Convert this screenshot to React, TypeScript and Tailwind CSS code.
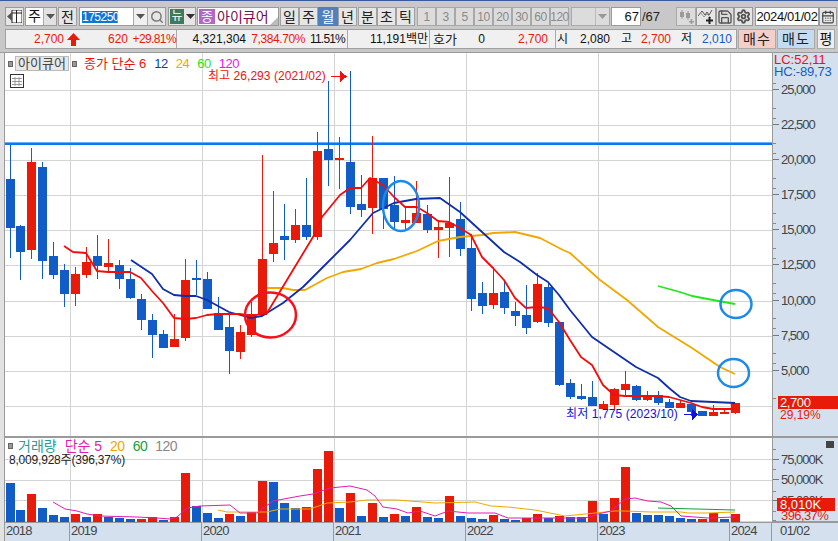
import type { ReactNode } from "react";
import { Search, Settings, Save, CalendarDays } from "lucide-react";

const RED = "#e81a0a";
const BLUE = "#125cc8";
const KR = "font-['Liberation_Sans','Noto_Sans_CJK_KR',sans-serif]";

// [wickTop, wickBottom, bodyTop, bodyBottom, up]
const candles: [number, number, number, number, number][] = [
  [145, 258, 179, 228, 0], [225, 280, 226, 252, 0], [148, 259, 162, 250, 1], [162, 279, 167, 261, 0],
  [242, 279, 256, 275, 0], [264, 307, 270, 294, 0], [267, 306, 274, 294, 1], [247, 278, 262, 275, 1],
  [235, 279, 256, 266, 0], [239, 272, 263, 267, 1], [260, 289, 265, 279, 0], [268, 299, 279, 298, 0],
  [294, 330, 299, 320, 0], [314, 358, 320, 335, 0], [330, 348, 334, 348, 0], [314, 347, 339, 347, 1],
  [259, 341, 280, 338, 1], [260, 295, 278, 280, 0], [272, 309, 279, 309, 0], [297, 330, 313, 330, 0],
  [313, 374, 327, 351, 0], [325, 359, 332, 352, 1], [302, 337, 314, 335, 1], [155, 315, 259, 315, 1],
  [191, 262, 243, 254, 1], [204, 260, 236, 240, 0], [209, 243, 225, 240, 1], [178, 240, 225, 237, 0],
  [132, 240, 151, 237, 1], [81, 186, 149, 160, 0], [137, 189, 158, 160, 1], [71, 214, 162, 207, 0],
  [175, 217, 204, 210, 0], [136, 234, 178, 208, 1], [178, 229, 178, 209, 0], [176, 229, 205, 222, 0],
  [208, 230, 220, 223, 1], [181, 223, 213, 223, 1], [205, 233, 214, 230, 0], [220, 258, 227, 230, 1],
  [177, 257, 223, 228, 1], [202, 256, 219, 249, 0], [234, 311, 248, 299, 0], [282, 314, 293, 306, 0],
  [267, 309, 293, 305, 1], [280, 314, 292, 308, 0], [302, 326, 311, 316, 0], [285, 334, 315, 328, 0],
  [273, 323, 284, 322, 1], [283, 327, 287, 323, 0], [322, 386, 322, 385, 0], [379, 399, 383, 397, 0],
  [384, 400, 396, 399, 0], [381, 406, 397, 406, 0], [401, 409, 404, 409, 1], [388, 409, 389, 405, 1],
  [371, 395, 384, 390, 1], [385, 401, 386, 400, 0], [391, 401, 395, 400, 1], [391, 405, 395, 403, 0],
  [399, 408, 402, 408, 0], [400, 408, 403, 408, 1], [404, 416, 404, 412, 0], [411, 416, 411, 416, 0],
  [405, 416, 412, 416, 1], [410, 414, 412, 413, 1], [403, 414, 403, 413, 1],
];

// [top, up]
const volumes: [number, number][] = [
  [482, 0], [509, 0], [493, 1], [507, 0], [514, 0], [516, 0], [513, 1], [516, 0], [513, 1], [516, 0],
  [517, 0], [518, 0], [518, 1], [516, 1], [519, 0], [516, 1], [472, 1], [505, 0], [512, 0], [517, 0],
  [513, 1], [515, 0], [511, 1], [480, 1], [481, 0], [502, 0], [507, 0], [506, 1], [468, 1], [450, 1],
  [507, 0], [492, 1], [515, 0], [502, 1], [516, 0], [513, 1], [515, 0], [506, 1], [516, 0], [517, 0],
  [495, 1], [515, 0], [517, 0], [518, 0], [514, 1], [518, 0], [519, 0], [517, 1], [513, 1], [517, 0],
  [515, 1], [516, 0], [516, 0], [500, 1], [513, 0], [497, 1], [466, 1], [512, 0], [514, 0], [514, 0],
  [515, 0], [517, 0], [518, 0], [518, 1], [512, 1], [518, 0], [513, 1],
];

const ma6 = "64,246 73,252 86,253 97,271 108,272 130,272 141,278 152,291 163,303 174,318 185,319 196,318 207,315 218,314 240,314 251,316 262,314 267,313 293,270 313,237 322,217 340,195 350,188 361,188 370,178 383,185 394,197 405,207 417,207 427,213 438,221 449,222 460,228 471,235 482,257 493,268 504,280 515,298 526,308 537,307 548,308 559,322 570,340 581,357 592,365 603,385 614,395 625,396 658,396 669,397 680,400 691,403 702,407 713,409 735,409";
const ma12 = "131,260 152,274 163,289 174,295 185,296 196,296 207,300 229,312 251,318 262,316 283,303 303,287 327,263 350,240 373,213 394,203 416,199 440,198 460,212 482,232 504,252 520,262 537,275 548,282 559,295 570,310 592,337 614,352 636,367 658,378 669,388 680,397 691,401 713,402 735,403";
const ma24 = "267,288 283,288 293,290 305,290 327,278 343,272 361,269 377,263 394,259 417,251 438,241 460,237 482,235 493,233 515,232 540,238 563,250 570,253 600,280 627,300 658,327 692,348 720,367 735,374";
const ma60 = "658,286 680,292 692,296 713,300 735,304";
const volMa5 = "53,501 65,508 77,510 87,513 100,515 137,516 157,517 170,518 177,516 187,507 200,505 230,504 240,512 257,512 273,500 300,495 313,493 330,487 350,485 367,489 375,495 383,506 397,508 408,512 420,510 435,515 448,510 468,512 495,512 508,517 531,517 585,517 598,513 611,510 625,498 635,497 648,500 661,501 671,505 681,515 708,517 735,516";
const volMa20 = "218,509 227,511 267,511 280,508 310,508 327,502 350,501 367,499 397,499 435,502 475,501 491,505 508,506 535,509 555,513 565,515 615,510 625,510 651,511 681,511 688,512 708,512 735,511";
const volMa60 = "658,507 735,509";

const yearLines = [70, 202, 334, 466, 598, 730];
const priceGrid = [90, 125, 160, 195, 230, 265, 301, 336, 371, 406];
const priceLabels: [string, number][] = [
  ["25,000", 89], ["22,500", 124], ["20,000", 159], ["17,500", 194], ["15,000", 229],
  ["12,500", 264], ["10,000", 300], ["7,500", 335], ["5,000", 370],
];

const cx = (i: number) => (i === 0 ? 10.5 : 9.5 + 11 * i);

function Btn({ children, w, active, dim }: { children?: ReactNode; w: string; active?: boolean; dim?: boolean }) {
  return (
    <div
      className={`${w} h-[19px] flex items-center justify-center border text-[14px] leading-none ${
        active
          ? "bg-[#4f81bd] border-[#4f81bd] text-white"
          : dim
            ? "bg-[#dcdcdc] border-[#a8a8a8] text-[#8a8a8a]"
            : "bg-[#e6e6e6] border-[#a0a0a0] text-[#222]"
      }`}
    >
      {children}
    </div>
  );
}

function Arrow({ color = "#555" }: { color?: string }) {
  return (
    <svg width="9" height="5" viewBox="0 0 9 5">
      <path d="M0 0H9L4.5 5Z" fill={color} />
    </svg>
  );
}

function Cell({ w, children, c, right }: { w: string; children?: ReactNode; c?: string; right?: boolean }) {
  return (
    <span className={`${w} shrink-0 whitespace-nowrap ${right ? "text-right" : ""} ${c ?? "text-[#111]"}`}>{children}</span>
  );
}

function Toolbar() {
  return (
    <div className="h-[28px] pt-[6px] pl-[5px] flex items-start">
      <div className="w-[19px] h-[19px] border border-[#9a9a9a] bg-[#e6e6e6] flex items-center justify-center">
        <svg width="15" height="13" viewBox="0 0 15 13">
          <path d="M5 0H15V13H5Z" fill="#fff" stroke="#222" />
          <path d="M9.5 0V13M5 3H15" stroke="#222" />
          <path d="M0 6.5L5 2V11Z" fill="#555" />
        </svg>
      </div>
      <div className="ml-[1px] w-[32px] h-[19px] flex border border-[#9a9a9a] bg-white">
        <span className="w-[17px] flex items-center justify-center text-[14px] text-[#111]">주</span>
        <span className="flex-1 bg-[#e2e2e2] border-l border-[#aaa] flex items-center justify-center"><Arrow /></span>
      </div>
      <div className="ml-[1px]"><Btn w="w-[19px]">전</Btn></div>
      <div className="ml-[2px] w-[87px] h-[19px] flex border border-[#9a9a9a] bg-white">
        <span className="ml-[2px] mt-[3px] w-[36px] h-[12px] bg-[#0a78d7] text-white text-[12px] leading-[12px] tracking-[-0.5px] border-r border-[#e87a10]">175250</span>
        <span className="ml-auto w-[14px] bg-[#f0f0f0] border-l border-[#aaa] flex items-center justify-center"><Arrow /></span>
        <span className="w-[18px] bg-[#e6e6e6] border-l border-[#aaa] flex items-center justify-center">
          <Search size={14} color="#777" strokeWidth={2.5} />
        </span>
      </div>
      <div className="ml-[2px] w-[28px] h-[19px] flex items-center border border-[#9a9a9a] bg-[#e6e6e6]">
        <span className="ml-[1px] w-[15px] h-[15px] bg-[#3f7a5a] text-white text-[12px] leading-[15px] text-center">뉴</span>
        <span className="ml-[2px]"><Arrow color="#333" /></span>
      </div>
      <div className="ml-[1px] w-[82px] h-[19px] relative flex items-center border border-[#9a9a9a] bg-white">
        <span className="ml-[1px] w-[16px] h-[15px] bg-[#b266c8] text-white text-[13px] leading-[15px] text-center">종</span>
        <span className="ml-[2px] text-[14px] leading-none text-[#7a0a4a]">아이큐어</span>
        <svg className="absolute right-0 bottom-0" width="8" height="8" viewBox="0 0 8 8"><path d="M8 0V8H0Z" fill="#bbb" /></svg>
      </div>
      <div className="ml-[1px] flex">
        <Btn w="w-[19px]">일</Btn>
        <Btn w="w-[19px]">주</Btn>
        <Btn w="w-[20px]" active>월</Btn>
        <Btn w="w-[19px]">년</Btn>
      </div>
      <div className="ml-[1px] flex">
        <Btn w="w-[19px]">분</Btn>
        <Btn w="w-[19px]">초</Btn>
        <Btn w="w-[19px]">틱</Btn>
      </div>
      <div className="ml-[2px] flex">
        {["1", "3", "5", "10", "20", "30", "60", "120"].map((t) => (
          <Btn key={t} w="w-[19px]" dim>
            <span className="text-[12px] tracking-[-0.5px]">{t}</span>
          </Btn>
        ))}
      </div>
      <div className="ml-[2px] w-[39px] h-[19px] flex border border-[#aaa] bg-[#dcdcdc]">
        <span className="ml-auto w-[14px] border-l border-[#bbb] flex items-center justify-center"><Arrow color="#999" /></span>
      </div>
      <div className="ml-[1px] w-[30px] h-[19px] border border-[#9a9a9a] bg-white text-right pr-[1px] text-[13px] leading-[17px] text-[#111]">67</div>
      <span className="ml-[1px] w-[34px] text-[13px] leading-[19px] text-[#222]">/67</span>
      <div className="w-[20px] h-[19px] border border-[#aaa] bg-[#dcdcdc] flex items-center justify-center">
        <svg width="15" height="15" viewBox="0 0 15 15" fill="#9a9a9a">
          <path d="M1 3h4v5H1zM2.500 1h1v9h-1zM7 4h4v5H7zM8.500 2h1v9h-1zM10 12h5v1.500h-5zM11.700 10h1.500v5h-1.500z" />
        </svg>
      </div>
      <div className="w-[20px] h-[19px] border border-[#9a9a9a] bg-[#e6e6e6] flex items-center justify-center">
        <svg width="16" height="15" viewBox="0 0 16 15" fill="none">
          <path d="M0 7L4 2L7 6L9 3L11 6L14 1" stroke="#555" />
          <path d="M2 3L6 8L9 5L13 9" stroke="#999" />
          <path d="M8 11.500H15M11.500 8V15" stroke="#222" strokeWidth="2" />
        </svg>
      </div>
      <div className="w-[18px] h-[19px] border border-[#9a9a9a] bg-[#dcdcdc] flex items-center justify-center">
        <Save size={16} color="#555" strokeWidth={2} />
      </div>
      <div className="w-[19px] h-[19px] border border-[#9a9a9a] bg-[#e6e6e6] flex items-center justify-center">
        <Settings size={15} color="#555" strokeWidth={3} />
      </div>
      <div className="ml-[2px] w-[64px] h-[19px] border border-[#9a9a9a] bg-white text-[13px] leading-[17px] text-center tracking-[-0.4px] text-[#111]">2024/01/02</div>
      <div className="w-[18px] h-[19px] border border-[#9a9a9a] bg-[#e6e6e6] flex items-center justify-center">
        <CalendarDays size={14} color="#444" strokeWidth={2} />
      </div>
    </div>
  );
}

function QuoteRow() {
  return (
    <div className="h-[21px] pl-[5px] flex items-start">
      <div className="w-[732px] h-[20px] flex items-center border border-[#a0a0a0] bg-[#f0f0f0] text-[12px] leading-none">
        <div className="w-[171px] h-full shrink-0 flex items-center border-r border-[#aaa]">
          <Cell w="w-[58px]" c="text-[#e81a0a]" right>2,700</Cell>
          <svg className="ml-[3px] shrink-0" width="13" height="13" viewBox="0 0 13 13">
            <path d="M6.500 0L13 7H9V13H4V7H0Z" fill="#e81a0a" />
          </svg>
          <Cell w="w-[48px]" c="text-[#e81a0a]" right>620</Cell>
          <Cell w="w-[48px]" c="text-[#e81a0a] tracking-[-0.6px]" right>+29.81%</Cell>
        </div>
        <div className="w-[171px] h-full shrink-0 flex items-center border-r border-[#aaa]">
          <Cell w="w-[69px]" right>4,321,304</Cell>
          <Cell w="w-[59px]" c="text-[#e81a0a] tracking-[-0.4px]" right>7,384.70%</Cell>
          <Cell w="w-[40px]" c="text-[#111] tracking-[-0.8px]" right>11.51%</Cell>
        </div>
        <div className="w-[82px] h-full shrink-0 flex items-center border-r border-[#aaa]">
          <Cell w="w-[80px]" right>11,191백만</Cell>
        </div>
        <div className="w-[126px] h-full shrink-0 flex items-center border-r border-[#aaa]">
          <Cell w="w-[30px]" c="text-[#222] pl-[3px] text-[13px]">호가</Cell>
          <Cell w="w-[25px]" right>0</Cell>
          <Cell w="w-[63px]" c="text-[#e81a0a]" right>2,700</Cell>
        </div>
        <div className="flex-1 h-full flex items-center pl-[1px]">
          <Cell w="w-[12px]">시</Cell>
          <Cell w="w-[41px]" right>2,080</Cell>
          <Cell w="w-[22px]" right>고</Cell>
          <Cell w="w-[39px]" c="text-[#e81a0a]" right>2,700</Cell>
          <Cell w="w-[21px]" right>저</Cell>
          <Cell w="w-[40px]" c="text-[#125cc8]" right>2,010</Cell>
        </div>
      </div>
      <div className="ml-[1px] w-[38px] h-[20px] border border-[#aaa] bg-[#f4cfc8] flex items-center justify-center text-[14px] tracking-[1px] text-[#222]">매수</div>
      <div className="ml-[1px] w-[38px] h-[20px] border border-[#aaa] bg-[#c4dcf2] flex items-center justify-center text-[14px] tracking-[1px] text-[#222]">매도</div>
      <div className="ml-[2px] w-[18px] h-[20px] border border-[#aaa] bg-[#eeeeee] flex items-center justify-center text-[14px] text-[#111]">평</div>
    </div>
  );
}

function PriceChart() {
  return (
    <svg className="absolute inset-0" width="767" height="383" viewBox="5 53 767 383" shapeRendering="crispEdges">
      {priceGrid.map((y) => (
        <line key={y} x1={5} x2={772} y1={y + 0.5} y2={y + 0.5} stroke="#d4d4d4" />
      ))}
      {yearLines.map((x) => (
        <line key={x} x1={x + 0.5} x2={x + 0.5} y1={53} y2={436} stroke="#d4d4d4" />
      ))}
      <rect x={5} y={142} width={767} height={1} fill="#66b0ff" />
      <rect x={5} y={143} width={767} height={2} fill="#0a78f5" />
      {candles.map(([wt, wb, bt, bb, up], i) => {
        const fill = up ? RED : BLUE;
        const x = cx(i);
        return (
          <g key={i} fill={fill}>
            <rect x={Math.floor(x)} y={wt} width={1} height={wb - wt} />
            <rect x={Math.floor(x) - 4} y={bt} width={9} height={Math.max(bb - bt, 2)} />
          </g>
        );
      })}
      <g fill="none" shapeRendering="auto" strokeLinejoin="round">
        <polyline points={ma24} stroke="#f0a800" strokeWidth={1.8} />
        <polyline points={ma60} stroke="#22e61e" strokeWidth={1.8} />
        <polyline points={ma12} stroke="#0f2fa8" strokeWidth={1.8} />
        <polyline points={ma6} stroke="#f20d0d" strokeWidth={1.8} />
        <ellipse cx={270.500} cy={315} rx={25.500} ry={22.500} stroke="#f5101c" strokeWidth={2.500} />
        <ellipse cx={401} cy={206} rx={18} ry={25} stroke="#1c8ae8" strokeWidth={2.500} />
        <ellipse cx={736} cy={304} rx={15.500} ry={14} stroke="#1c8ae8" strokeWidth={2.500} />
        <ellipse cx={733.500} cy={373} rx={15.500} ry={14} stroke="#1c8ae8" strokeWidth={2.500} />
      </g>
      <path d="M331 76.500H341" stroke="#f01010" />
      <path d="M340 71L347 76.500L340 82Z" fill="#f01010" />
      <path d="M684 414.500H693" stroke="#1010e0" />
      <path d="M692 409L698 414.500L692 420Z" fill="#1010e0" />
    </svg>
  );
}

function VolumeChart() {
  return (
    <svg className="absolute inset-0" width="767" height="85" viewBox="5 437 767 85" shapeRendering="crispEdges">
      {[458, 479, 499, 520].map((y) => (
        <line key={y} x1={5} x2={772} y1={y + 0.5} y2={y + 0.5} stroke="#d4d4d4" />
      ))}
      {yearLines.map((x) => (
        <line key={x} x1={x + 0.5} x2={x + 0.5} y1={437} y2={522} stroke="#d4d4d4" />
      ))}
      {volumes.map(([top, up], i) => (
        <rect key={i} x={Math.floor(cx(i)) - 4} y={top} width={9} height={521 - top} fill={up ? RED : BLUE} />
      ))}
      <g fill="none" shapeRendering="auto">
        <polyline points={volMa60} stroke="#12a03c" strokeWidth={1} />
        <polyline points={volMa20} stroke="#f0a800" strokeWidth={1} />
        <polyline points={volMa5} stroke="#e01cb4" strokeWidth={1} />
      </g>
    </svg>
  );
}

function AxisTick({ y, label }: { y: number; label: string }) {
  return (
    <div className="absolute left-0 h-[14px] flex items-center" style={{ top: y - 7 }}>
      <span className="w-[6px] h-px bg-[#777]" />
      <span className="ml-[2px] text-[13px] leading-none tracking-[-1px] text-[#444]">{label}</span>
    </div>
  );
}

function MinorTicks({ ys }: { ys: number[] }) {
  return (
    <>
      {ys.map((y) => (
        <span key={y} className="absolute left-0 w-[3px] h-px bg-[#888]" style={{ top: y }} />
      ))}
    </>
  );
}

export default function App() {
  const timeCells = [
    { w: "w-[65px]", t: "2018" },
    { w: "w-[132px]", t: "2019" },
    { w: "w-[132px]", t: "2020" },
    { w: "w-[132px]", t: "2021" },
    { w: "w-[132px]", t: "2022" },
    { w: "w-[132px]", t: "2023" },
    { w: "w-[42px]", t: "2024" },
  ];
  return (
    <div className={`w-[838px] h-[541px] overflow-hidden bg-[#c8c8c8] ${KR}`}>
      <div className="h-px bg-[#3c5a9e]" />
      <Toolbar />
      <QuoteRow />
      <div className="h-[2px]" />
      <div className="h-px bg-[#9a9a9a]" />
      <div className="flex h-[488px]">
        <div className="w-[5px] shrink-0 bg-[#e2e2e2] border-r border-[#9a9a9a]" />
        <div className="flex-1 flex flex-col">
          {/* price pane */}
          <div className="h-[383px] flex">
            <div className="w-[767px] relative bg-white">
              <PriceChart />
              <div className="absolute left-[3px] top-[3px] flex items-center gap-[1px]">
                <span className="w-[5px] h-[6px] bg-[#999] border border-[#666]" />
                <span className="ml-[1px] w-[54px] h-[15px] bg-[#e8e8e8] border border-[#bbb] text-[13px] leading-[13px] text-center text-[#444]">아이큐어</span>
                <span className="ml-[2px] w-[5px] h-[6px] bg-[#999] border border-[#666]" />
                <div className="ml-[6px] flex gap-[8px] text-[13px] leading-none">
                  <span className="text-[#f01010]">종가 단순 6</span>
                  <span className="text-[#1040b0] tracking-[-0.5px]">12</span>
                  <span className="text-[#f0a800] tracking-[-0.5px]">24</span>
                  <span className="text-[#22e61e] tracking-[-0.5px]">60</span>
                  <span className="text-[#f010f0] tracking-[-0.5px]">120</span>
                </div>
              </div>
              <svg className="absolute left-[5px] top-[21px]" width="14" height="14" viewBox="0 0 14 14" fill="none" stroke="#333">
                <rect x="0.500" y="0.500" width="13" height="13" />
                <path d="M2 4.500H12M2 7.500H12M2 10.500H12M5 3V12M9 3V12" stroke="#999" />
              </svg>
              <span className="absolute left-[203px] top-[17px] whitespace-nowrap text-[12px] leading-none tracking-[0.05px] text-[#f01010]">최고 26,293 (2021/02)</span>
              <span className="absolute left-[561px] top-[355px] whitespace-nowrap text-[12px] leading-none tracking-[0.1px] text-[#1010e0]">최저 1,775 (2023/10)</span>
            </div>
            <div className="flex-1 relative bg-[#d5e0ee] border-l border-[#9a9a9a]">
              <span className="absolute left-[1px] top-[1px] text-[13px] leading-[12px] text-[#f01010]">LC:52,11</span>
              <span className="absolute left-[1px] top-[13px] text-[13px] leading-[12px] tracking-[-0.2px] text-[#125cc8]">HC:-89,73</span>
              {priceLabels.map(([label, y]) => (
                <AxisTick key={label} y={y - 53} label={label} />
              ))}
              <MinorTicks ys={[30, 55, 65, 90, 100, 125, 135, 160, 170, 195, 205, 230, 240, 265, 275, 300, 310, 345]} />
              <div className="absolute left-[5px] top-[343px] w-[60px] h-[13px] bg-[#e81a0a] text-white text-[13px] leading-[13px] pl-[2px] tracking-[-0.4px]">2,700</div>
              <span className="absolute left-[7px] top-[356px] text-[12px] leading-[13px] text-[#e81a0a]">29,19%</span>
            </div>
          </div>
          <div className="h-[2px] bg-[#9a9a9a]" />
          {/* volume pane */}
          <div className="h-[83px] flex">
            <div className="w-[767px] relative bg-white">
              <VolumeChart />
              <div className="absolute left-[3px] top-[1px] flex items-center">
                <span className="w-[5px] h-[6px] bg-[#999] border border-[#666]" />
                <div className="ml-[5px] flex gap-[8px] text-[14px] leading-none">
                  <span className="text-[#2a9d8f]">거래량</span>
                  <span className="text-[#e01cb4]">단순 5</span>
                  <span className="text-[#f0a800] tracking-[-0.5px]">20</span>
                  <span className="text-[#12a03c] tracking-[-0.5px]">60</span>
                  <span className="text-[#888] tracking-[-0.5px]">120</span>
                </div>
              </div>
              <span className="absolute left-[4px] top-[16px] text-[12px] leading-none tracking-[-0.2px] text-[#222]">8,009,928주(396,37%)</span>
            </div>
            <div className="flex-1 relative bg-[#d5e0ee] border-l border-[#9a9a9a]">
              <span className="absolute right-[4px] top-[3px] w-[8px] h-[7px] bg-[#444]" />
              <AxisTick y={21} label="75,000K" />
              <AxisTick y={41} label="50,000K" />
              <AxisTick y={62} label="25,000K" />
              <MinorTicks ys={[11, 31, 53, 73, 82]} />
              <div className="absolute left-[4px] top-[60px] w-[58px] h-[13px] bg-[#e81a0a] text-white text-[13px] leading-[13px] pl-[3px]">8,010K</div>
              <span className="absolute left-[8px] top-[73px] text-[13px] leading-[10px] tracking-[-0.6px] text-[#e81a0a]">396,37%</span>
            </div>
          </div>
          <div className="h-[2px] bg-[#9a9a9a]" />
          {/* time axis */}
          <div className="flex-1 flex bg-[#d5e0ee]">
            {timeCells.map((c) => (
              <div key={c.t} className={`${c.w} border-r border-[#9a9a9a] pl-[1px] text-[13px] leading-[15px] tracking-[-0.8px] text-[#444]`}>
                {c.t}
              </div>
            ))}
            <div className="flex-1 pl-[8px] text-[13px] leading-[15px] tracking-[-0.6px] text-[#444]">01/02</div>
          </div>
        </div>
      </div>
    </div>
  );
}
